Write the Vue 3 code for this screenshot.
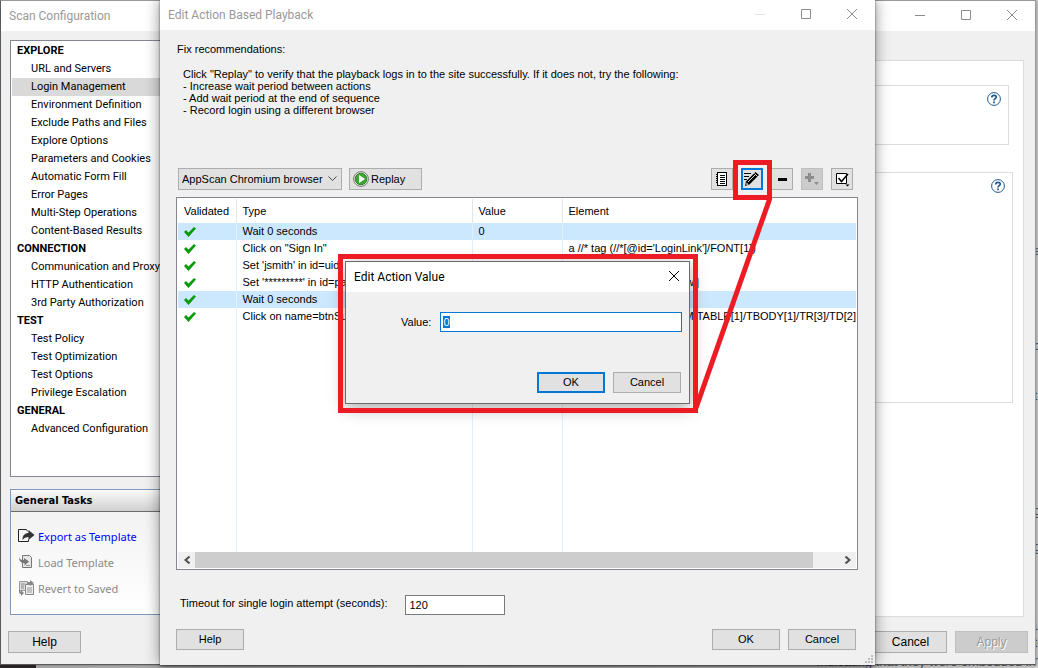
<script setup>
import { ref, onMounted } from 'vue'

const groups = [
  { name: 'EXPLORE', items: ['URL and Servers', 'Login Management', 'Environment Definition', 'Exclude Paths and Files', 'Explore Options', 'Parameters and Cookies', 'Automatic Form Fill', 'Error Pages', 'Multi-Step Operations', 'Content-Based Results'] },
  { name: 'CONNECTION', items: ['Communication and Proxy', 'HTTP Authentication', '3rd Party Authorization'] },
  { name: 'TEST', items: ['Test Policy', 'Test Optimization', 'Test Options', 'Privilege Escalation'] },
  { name: 'GENERAL', items: ['Advanced Configuration'] },
]
const current = ref('Login Management')

const rows = [
  { type: 'Wait 0 seconds', value: '0', element: '', marked: true },
  { type: 'Click on "Sign In"', value: '', element: "a //* tag (//*[@id='LoginLink']/FONT[1])" },
  { type: "Set 'jsmith' in id=uid", value: 'jsmith', element: "//* tag (//*[@id='uid']" },
  { type: "Set '*********' in id=passw", value: '', element: "pw //* tag (//*[@id='passw']" },
  { type: 'Wait 0 seconds', value: '0', element: '', marked: true },
  { type: 'Click on name=btnSubmit', value: '', element: '/FORM/TABLE[1]/TBODY[1]/TR[3]/TD[2]', end: true },
]

const edgeText = [
  { y: 245, text: 'e' },
  { y: 340, text: 'c' },
  { y: 390, text: 't' },
  { y: 505, text: 'g' },
  { y: 541, text: 'g' },
  { y: 620, text: 'u' },
  { y: 637, text: 'to' },
  { y: 655, text: 'n' },
]

const timeout = ref('120')
const actionValue = ref('0')
const valueBox = ref(null)
onMounted(() => {
  valueBox.value.focus()
  valueBox.value.select()
})
</script>

<template>
  <div class="desktop">
    <p class="behind">indicating that they were embedded in</p>
    <span v-for="e in edgeText" :key="e.y" class="edge" :style="{ top: e.y + 'px' }">{{ e.text }}</span>

    <section class="window scan">
      <header class="titlebar">
        <h1>Scan Configuration</h1>
        <div class="caption">
          <button type="button" aria-label="Minimize"><svg width="12" height="12"><path d="M1 6.500h10" /></svg></button>
          <button type="button" aria-label="Maximize"><svg width="12" height="12"><path d="M1.500 1.500h9v9h-9z" /></svg></button>
          <button type="button" aria-label="Close"><svg width="12" height="12"><path d="M1 1l10 10M11 1L1 11" /></svg></button>
        </div>
      </header>
      <div class="scan-body">
        <aside class="side">
          <nav class="tree" aria-label="Configuration">
            <template v-for="g in groups" :key="g.name">
              <h2>{{ g.name }}</h2>
              <a v-for="item in g.items" :key="item" href="#" :class="{ current: item === current }" @click.prevent="current = item">{{ item }}</a>
            </template>
          </nav>
          <section class="tasks">
            <h2>General Tasks</h2>
            <div class="task-list">
              <a href="#">
                <svg width="17" height="14" viewBox="0 0 17 14">
                  <path d="M8.500 .5h-8v12h10v-2M8 .5l2 2" fill="none" stroke="#222" />
                  <path d="M4.500 11C4.500 6 7 4 10.500 4V1l6 5-6 5V8C8 8 6 9 4.500 11z" fill="#333" />
                </svg>
                Export as Template
              </a>
              <a href="#" class="off" aria-disabled="true">
                <svg width="17" height="14" viewBox="0 0 17 14">
                  <path d="M4.500 .5h7l2 2v10h-9z" fill="#e8e8e8" stroke="#777" />
                  <path d="M1 2c1 3 3 3 5 3V3l5 3.500-4.500 4V8C3 8 1 6 1 2z" fill="#777" />
                  <path d="M8 10.500h4" stroke="#999" />
                </svg>
                Load Template
              </a>
              <a href="#" class="off" aria-disabled="true">
                <svg width="17" height="16" viewBox="0 0 17 16">
                  <path d="M1.500 1.500h8v9h-8z" fill="#ddd" stroke="#999" />
                  <path d="M3 4h4M3 6h3M3 8h3" stroke="#888" />
                  <path d="M7.500 4.500h8v10h-8z" fill="#eee" stroke="#888" />
                  <path d="M9 8h5M9 10h5M9 12h5" stroke="#999" />
                  <path d="M9 4V2h3V0l4 3-4 3V4zM1 9v3c0 2 2 2 2 2v2l3-3-3-3v2z" fill="#888" />
                </svg>
                Revert to Saved
              </a>
            </div>
          </section>
        </aside>
        <main class="page">
          <div class="panel first">
            <button type="button" class="help" aria-label="Help">
              <svg width="14" height="14" viewBox="0 0 14 14"><circle cx="7" cy="7" r="6.400" /><path d="M4.800 5.500c0-3 4.600-2.800 4.400-.2C9.100 6.700 7 6.600 7 8.500M7 9.500v1.700" /></svg>
            </button>
          </div>
          <div class="panel second">
            <button type="button" class="help" aria-label="Help">
              <svg width="14" height="14" viewBox="0 0 14 14"><circle cx="7" cy="7" r="6.400" /><path d="M4.800 5.500c0-3 4.600-2.800 4.400-.2C9.100 6.700 7 6.600 7 8.500M7 9.500v1.700" /></svg>
            </button>
          </div>
        </main>
      </div>
      <footer class="scan-foot">
        <button type="button" class="btn">Help</button>
        <span class="grow"></span>
        <button type="button" class="btn">Cancel</button>
        <button type="button" class="btn" disabled>Apply</button>
      </footer>
    </section>

    <section class="window playback">
      <header class="titlebar">
        <h1>Edit Action Based Playback</h1>
        <div class="caption">
          <button type="button" aria-label="Minimize" disabled><svg width="12" height="12"><path d="M1 6.500h10" /></svg></button>
          <button type="button" aria-label="Maximize"><svg width="12" height="12"><path d="M1.500 1.500h9v9h-9z" /></svg></button>
          <button type="button" aria-label="Close"><svg width="12" height="12"><path d="M1 1l10 10M11 1L1 11" /></svg></button>
        </div>
      </header>
      <div class="playback-body">
        <p class="lead">Fix recommendations:</p>
        <div class="advice">
          <p>Click "Replay" to verify that the playback logs in to the site successfully. If it does not, try the following:</p>
          <p>- Increase wait period between actions</p>
          <p>- Add wait period at the end of sequence</p>
          <p>- Record login using a different browser</p>
        </div>
        <div class="toolbar">
          <span class="combo">
            <select aria-label="Browser"><option>AppScan Chromium browser</option></select>
            <svg width="9" height="6" viewBox="0 0 9 6"><path d="M.5 .5l4 4 4-4" fill="none" stroke="#444" /></svg>
          </span>
          <button type="button" class="btn replay">
            <svg width="16" height="16" viewBox="0 0 16 16">
              <circle cx="8" cy="8" r="7.400" fill="#eee" stroke="#777" />
              <circle cx="8" cy="8" r="5.800" fill="#3fa535" stroke="#2a8424" />
              <path d="M6 4l6 4-6 4z" fill="#fff" />
            </svg>
            Replay
          </button>
          <span class="grow"></span>
          <button type="button" class="tool" aria-label="View list">
            <svg width="12" height="14" viewBox="0 0 12 14" shape-rendering="crispEdges">
              <path d="M1.500 .5h9v13h-9z" fill="#fff" stroke="#000" />
              <path d="M4 3.500h5M4 5.500h5M4 7.500h5M4 9.500h5M4 11.500h5M0 2.500h2M0 4.500h2M0 6.500h2M0 8.500h2M0 10.500h2" stroke="#000" />
            </svg>
          </button>
          <button type="button" class="tool active" aria-label="Edit value">
            <svg width="16" height="16" viewBox="0 0 16 16">
              <path d="M0 2.500h7M0 5.500h5M0 8.500h3" stroke="#000" />
              <path d="M1 15l1-4.500L11.500 1l3.500 3L5.500 13.500z" fill="#000" />
              <path d="M4 11L11 4M10.500 2.500l3 3" stroke="#e1e1e1" />
              <path d="M2.500 11.500l2 2-2 .5z" fill="#fff" />
            </svg>
          </button>
          <button type="button" class="tool remove" aria-label="Remove">
            <svg width="9" height="3"><path d="M0 0h9v3h-9z" /></svg>
          </button>
          <button type="button" class="tool add" aria-label="Add" disabled>
            <svg width="16" height="14" viewBox="0 0 16 14"><path d="M4 1h3v3h3v3H7v3H4V7H1V4h3zM10 10h5l-2.500 3z" fill="#8c8c8c" /></svg>
          </button>
          <button type="button" class="tool" aria-label="Validate">
            <svg width="15" height="15" viewBox="0 0 15 15">
              <path d="M1.500 1.500h10v10h-10z" fill="#fff" stroke="#000" />
              <path d="M3.500 6l3 3.500L13 2" fill="none" stroke="#000" stroke-width="1.500" />
              <path d="M10.500 12.500h4l-2 2z" />
            </svg>
          </button>
        </div>

        <div class="grid">
          <table>
            <colgroup><col class="c1" /><col class="c2" /><col class="c3" /><col /></colgroup>
            <thead>
              <tr><th>Validated</th><th>Type</th><th>Value</th><th>Element</th></tr>
            </thead>
            <tbody>
              <tr v-for="(r, i) in rows" :key="i" :class="{ marked: r.marked }">
                <td class="tick"><svg width="12" height="10" viewBox="0 0 12 10"><path d="M0 5l2-2 2.500 2.500L10 0l2 1.500L4.500 10z" fill="#0a9a0a" /></svg></td>
                <td>{{ r.type }}</td>
                <td>{{ r.value }}</td>
                <td :class="{ end: r.end }">{{ r.element }}</td>
              </tr>
              <tr class="filler"><td></td><td></td><td></td><td></td></tr>
            </tbody>
          </table>
          <div class="scroll">
            <button type="button" aria-label="Scroll left"><svg width="6" height="8"><path d="M5.500 .5L1.500 4l4 3.500" /></svg></button>
            <span class="thumb"></span>
            <button type="button" aria-label="Scroll right"><svg width="6" height="8"><path d="M.5 .5L4.500 4l-4 3.500" /></svg></button>
          </div>
        </div>

        <div class="timeout">
          <label for="timeout">Timeout for single login attempt (seconds):</label>
          <input id="timeout" v-model="timeout" type="text" />
        </div>
        <footer class="playback-foot">
          <button type="button" class="btn">Help</button>
          <span class="grow"></span>
          <button type="button" class="btn">OK</button>
          <button type="button" class="btn">Cancel</button>
        </footer>
      </div>
      <svg class="grip" width="9" height="9" shape-rendering="crispEdges"><path d="M6 0h2v2h-2zM3 3h2v2h-2zM6 3h2v2h-2zM0 6h2v2h-2zM3 6h2v2h-2zM6 6h2v2h-2z" fill="#bcbcbc" /></svg>
    </section>

    <section class="window modal" role="dialog" aria-label="Edit Action Value">
      <header class="titlebar">
        <h1>Edit Action Value</h1>
        <div class="caption">
          <button type="button" aria-label="Close"><svg width="12" height="12"><path d="M1 1l10 10M11 1L1 11" /></svg></button>
        </div>
      </header>
      <div class="field">
        <label for="value">Value:</label>
        <input id="value" ref="valueBox" v-model="actionValue" type="text" />
      </div>
      <footer class="modal-foot">
        <button type="button" class="btn primary">OK</button>
        <button type="button" class="btn">Cancel</button>
      </footer>
    </section>

    <svg class="callout" width="436" height="256" viewBox="0 0 436 256" aria-hidden="true">
      <path d="M397.500 4.500h34v35h-34zM2.500 98.500h355v154H2.500z" />
      <path d="M432 40L358 250" />
    </svg>
  </div>
</template>

<style>
body { background: #c9c9c9; }
</style>

<style scoped>
* { box-sizing: border-box; }
h1, h2, p { margin: 0; font-weight: normal; }
button, input, select { font: inherit; color: inherit; margin: 0; }
.desktop {
  position: relative;
  height: 100vh;
  overflow: hidden;
  background: linear-gradient(90deg, #2c2829 36px, #b4b4b4 36px, #d2d2d2);
  font: 11px/13px "Liberation Sans", Arial, sans-serif;
  color: #000;
}
.behind { position: absolute; right: 2px; bottom: -1px; font-size: 13px; line-height: 14px; color: #555; white-space: nowrap; }
.edge { position: absolute; left: calc(100% - 4px); font-size: 12px; color: #456; white-space: nowrap; }
.window { position: absolute; display: flex; flex-direction: column; background: #f0f0f0; }
.scan { inset: 0 2px 3px 0; border: 1px solid #5a5a5a; border-top-color: #999; border-right-color: #999; box-shadow: 0 0 5px rgba(0, 0, 0, .4); }
.playback { inset: 0 163px 3px 160px; box-shadow: 0 1px 2px rgba(0, 0, 0, .6), 0 0 14px rgba(0, 0, 0, .45); }
.modal { left: 345px; top: 261px; width: 345px; border: 1px solid #6b6b6b; box-shadow: 0 4px 16px rgba(0, 0, 0, .35); }
.titlebar { display: flex; align-items: center; justify-content: space-between; height: 30px; flex: none; padding: 0 0 0 8px; background: #fff; color: #999; }
.titlebar h1 { font: 12px/16px Roboto, "Open Sans", sans-serif; white-space: nowrap; }
.caption { display: flex; align-self: flex-start; }
.caption button { width: 46px; height: 28px; padding: 0; border: 0; background: none; display: grid; place-items: center; }
.caption svg { fill: none; stroke: #8c8c8c; }
.caption button:disabled svg { stroke: #e2e2e2; }
.modal .titlebar { color: #000; }
.modal .caption svg { stroke: #000; }
.modal .caption button { width: 30px; }
.grow { flex: 1; }

.scan-body { flex: 1; display: flex; gap: 20px; padding: 9px 11px 0 9px; min-height: 0; }
.side { width: 220px; display: flex; flex-direction: column; gap: 12px; font-family: Roboto, sans-serif; }
.tree { flex: none; height: 437px; border: 1px solid #828790; background: #fff; padding: 1px; }
.tree h2 { font: bold 11px/18px Roboto, sans-serif; padding-left: 5px; }
.tree a { display: block; height: 18px; line-height: 18px; padding-left: 19px; color: #000; text-decoration: none; white-space: nowrap; }
.tree a.current { background: #d9d9d9; }
.tasks { height: 126px; border: 1px solid #7a9ab8; background: linear-gradient(#f0f0f0, #fff); font-family: "Noto Sans", sans-serif; }
.tasks h2 { font: bold 11px/21px "DejaVu Sans Condensed", sans-serif; padding-left: 4px; border-bottom: 1px solid #6b6b6b; background: linear-gradient(#fbfbfb, #cfcfcf); }
.task-list { display: flex; flex-direction: column; gap: 10px; padding: 16px 7px; }
.task-list a { display: flex; align-items: center; gap: 3px; height: 16px; color: #00f; text-decoration: none; white-space: nowrap; }
.task-list a.off { color: #8a8a8a; }
.page { flex: 1; margin-top: 20px; padding: 24px 14px 12px; border: 1px solid #dcdcdc; background: #fff; }
.panel { display: flex; justify-content: flex-end; align-items: flex-start; border: 1px solid #dcdcdc; padding: 6px 7px; }
.panel.first { height: 60px; }
.panel.second { height: 231px; margin: 27px -4px 0 0; }
.help { padding: 0; border: 0; background: none; display: block; }
.help svg { display: block; fill: none; stroke: #235a8f; }
.help path { stroke-width: 1.8px; }

.btn { height: 21px; width: 68px; padding: 0; border: 1px solid #adadad; background: #e1e1e1; text-align: center; }
.btn:disabled { background: #ccc; border-color: #bfbfbf; color: #9a9a9a; text-shadow: 1px 1px #fff; }
.btn.primary { border: 2px solid #0078d7; }
.scan-foot { display: flex; gap: 8px; padding: 14px 7px 11px; font-size: 12px; }
.scan-foot .btn { width: 73px; height: 22px; }

.playback-body { flex: 1; display: flex; flex-direction: column; padding: 13px 17px 15px 16px; min-height: 0; }
.lead { padding-left: 1px; }
.advice { padding: 12px 0 0 7px; line-height: 12px; height: 112px; white-space: nowrap; }
.toolbar { display: flex; align-items: center; gap: 8px; padding: 0 5px 0 2px; height: 22px; margin-bottom: 7px; }
.toolbar .grow { margin-right: -8px; }
.combo { position: relative; width: 164px; height: 22px; margin-right: -1px; }
.combo select { appearance: none; width: 100%; height: 22px; padding: 0 3px; border: 1px solid #adadad; border-radius: 0; background: #e1e1e1; }
.combo svg { position: absolute; right: 5px; top: 8px; pointer-events: none; }
.replay { display: flex; align-items: center; gap: 2px; width: 73px; height: 22px; padding: 0 3px; }
.tool { display: grid; place-items: center; width: 22px; height: 22px; padding: 0; border: 1px solid #adadad; background: #e1e1e1; }
.tool.active { border: 2px solid #0078d7; }
.tool:disabled { background: #ccc; border-color: #bfbfbf; }

.grid { flex: 1; display: flex; flex-direction: column; min-height: 0; border: 1px solid #828790; background: #fff; padding: 1px; }
table { flex: 1; width: 100%; table-layout: fixed; border-collapse: collapse; }
.c1 { width: 58px; }
.c2 { width: 236px; }
.c3 { width: 90px; }
th, td { padding: 0 6px; text-align: left; font-weight: normal; white-space: nowrap; overflow: hidden; border-right: 1px solid #e5eefb; }
th:last-child, td:last-child { border-right: 0; }
th { height: 24px; border-color: #e5e5e5; }
td { height: 17px; }
td.end { text-align: right; padding-right: 0; }
td.tick svg { display: block; }
.marked { background: #cce8ff; }
.filler td { height: 100%; }
.scroll { display: flex; height: 16px; background: #f0f0f0; }
.scroll button { width: 17px; padding: 0; border: 0; background: none; display: grid; place-items: center; }
.scroll path { fill: none; stroke: #505050; stroke-width: 2px; }
.thumb { flex: 1; background: #cdcdcd; margin-right: 26px; }

.timeout { display: flex; gap: 18px; padding: 25px 4px 0; }
.timeout label { padding-top: 2px; }
.timeout input { width: 100px; height: 20px; padding: 0 3px; border: 1px solid #7a7a7a; background: #fff; }
.playback-foot { display: flex; gap: 8px; padding: 14px 2px 0 0; }
.grip { position: absolute; right: 1px; bottom: 1px; }

.field { display: flex; align-items: center; gap: 9px; padding: 20px 7px 0 55px; }
.field input { flex: 1; height: 20px; padding: 0 2px; border: 1px solid #0078d7; outline: 0; background: #fff; }
.field input::selection { background: #0078d7; color: #fff; }
.modal-foot { display: flex; justify-content: flex-end; gap: 8px; padding: 40px 8px 10px; }
.callout { position: absolute; left: 338px; top: 158px; pointer-events: none; }
.callout path { fill: none; stroke: #ed1c24; stroke-width: 5px; }
</style>
